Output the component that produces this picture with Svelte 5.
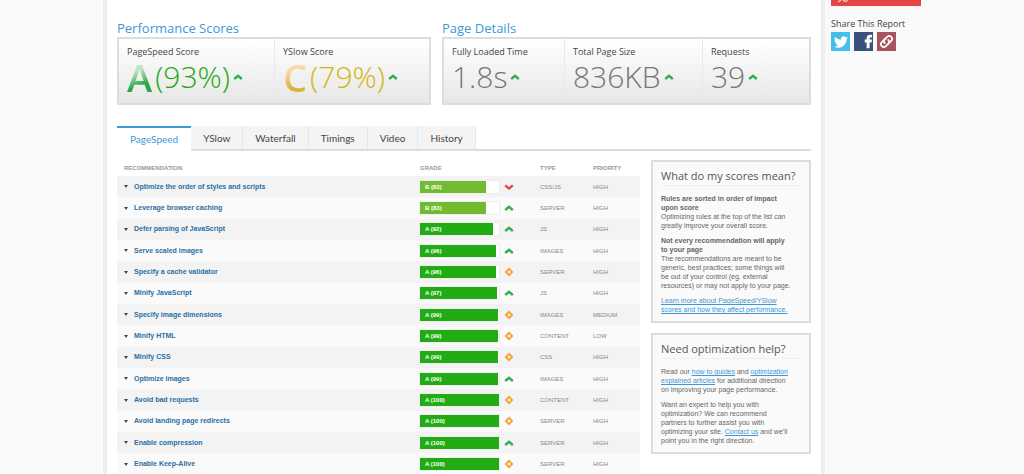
<script>
  const scores = [
    { label: 'PageSpeed Score', grade: 'A', value: '(93%)', tone: 'green' },
    { label: 'YSlow Score', grade: 'C', value: '(79%)', tone: 'gold' }
  ];
  const details = [
    { label: 'Fully Loaded Time', value: '1.8s' },
    { label: 'Total Page Size', value: '836KB' },
    { label: 'Requests', value: '39' }
  ];
  const tabs = ['PageSpeed', 'YSlow', 'Waterfall', 'Timings', 'Video', 'History'];
  let active = $state('PageSpeed');
  const rows = [
    ['Optimize the order of styles and scripts', 'B', 83, 'down', 'CSS/JS', 'HIGH'],
    ['Leverage browser caching', 'B', 83, 'up', 'SERVER', 'HIGH'],
    ['Defer parsing of JavaScript', 'A', 92, 'up', 'JS', 'HIGH'],
    ['Serve scaled images', 'A', 96, 'up', 'IMAGES', 'HIGH'],
    ['Specify a cache validator', 'A', 96, 'same', 'SERVER', 'HIGH'],
    ['Minify JavaScript', 'A', 97, 'up', 'JS', 'HIGH'],
    ['Specify image dimensions', 'A', 99, 'same', 'IMAGES', 'MEDIUM'],
    ['Minify HTML', 'A', 99, 'same', 'CONTENT', 'LOW'],
    ['Minify CSS', 'A', 99, 'same', 'CSS', 'HIGH'],
    ['Optimize images', 'A', 99, 'up', 'IMAGES', 'HIGH'],
    ['Avoid bad requests', 'A', 100, 'same', 'CONTENT', 'HIGH'],
    ['Avoid landing page redirects', 'A', 100, 'same', 'SERVER', 'HIGH'],
    ['Enable compression', 'A', 100, 'up', 'SERVER', 'HIGH'],
    ['Enable Keep-Alive', 'A', 100, 'same', 'SERVER', 'HIGH']
  ];
</script>

{#snippet trend(kind)}
  <svg class="trend" viewBox="0 0 10 10" aria-hidden="true">
    {#if kind === 'up'}
      <path d="M1.2 7 5 3.8 8.8 7" stroke="#32ac4e" />
    {:else if kind === 'down'}
      <path d="M1.2 3.4 5 6.6 8.8 3.4" stroke="#dc4547" />
    {:else}
      <path d="M5 0.600 9.400 5 5 9.400 0.600 5ZM5 3.200 3.200 5 5 6.800 6.800 5Z" fill="#f7a12c" fill-rule="evenodd" />
    {/if}
  </svg>
{/snippet}

<div class="page">
  <main>
    <div class="summary">
      <section class="scores">
        <h2>Performance Scores</h2>
        <div class="box">
          {#each scores as s}
            <div class="cell">
              <h3>{s.label}</h3>
              <div class="figure {s.tone}"><b>{s.grade}</b><span>{s.value}</span>{@render trend('up')}</div>
            </div>
          {/each}
        </div>
      </section>
      <section class="details">
        <h2>Page Details</h2>
        <div class="box">
          {#each details as d}
            <div class="cell">
              <h3>{d.label}</h3>
              <div class="figure"><span>{d.value}</span>{@render trend('up')}</div>
            </div>
          {/each}
        </div>
      </section>
    </div>

    <nav class="tabs">
      {#each tabs as t}
        <button type="button" class:active={active === t} onclick={() => (active = t)}>{t}</button>
      {/each}
    </nav>

    <div class="content">
      <table>
        <colgroup><col /><col class="c-grade" /><col class="c-trend" /><col class="c-type" /><col class="c-priority" /></colgroup>
        <thead>
          <tr><th class="name">Recommendation</th><th colspan="2">Grade</th><th>Type</th><th>Priority</th></tr>
        </thead>
        <tbody>
          {#each rows as [name, grade, score, change, type, priority]}
            <tr>
              <td class="name">
                <a href="#rule"><svg viewBox="0 0 4 3" aria-hidden="true"><path d="M0 0h4L2 3z" fill="#3d4a5e" /></svg>{name}</a>
              </td>
              <td>
                <div class="meter"><div class="fill {grade}" style:width="{score}%">{grade} ({score})</div></div>
              </td>
              <td class="change">{@render trend(change)}</td>
              <td>{type}</td>
              <td>{priority}</td>
            </tr>
          {/each}
        </tbody>
      </table>

      <div class="help">
        <section class="panel">
          <h2>What do my scores mean?</h2>
          <p><strong>Rules are sorted in order of impact upon score</strong><br />Optimizing rules at the top of the list can greatly improve your overall score.</p>
          <p><strong>Not every recommendation will apply to your page</strong><br />The recommendations are meant to be generic, best practices; some things will be out of your control (eg. external resources) or may not apply to your page.</p>
          <p><a href="#scores">Learn more about PageSpeed/YSlow scores and how they affect performance.</a></p>
        </section>
        <section class="panel">
          <h2>Need optimization help?</h2>
          <p>Read our <a href="#guides">how to guides</a> and <a href="#articles">optimization explained articles</a> for additional direction on improving your page performance.</p>
          <p>Want an expert to help you with optimization? We can recommend partners to further assist you with optimizing your site. <a href="#contact">Contact us</a> and we'll point you in the right direction.</p>
        </section>
      </div>
    </div>
  </main>

  <aside>
    <button type="button" class="download" aria-label="Download PDF">
      <svg viewBox="0 0 12 3" aria-hidden="true"><path d="M1 1.600C2.500 1.400 3.300 1 4 0M6 0C7.500 1.600 9.500 2.200 10.500 0" fill="none" stroke="#fff" stroke-opacity=".75" stroke-width="1.300" /></svg>
    </button>
    <h3>Share This Report</h3>
    <div class="share">
      <a href="#twitter" class="twitter" aria-label="Twitter">
        <svg viewBox="0 0 24 24"><path fill="#fff" d="M23.950 4.570a10 10 0 0 1-2.820.770 4.960 4.960 0 0 0 2.160-2.720c-.950.550-2 .960-3.130 1.180a4.920 4.920 0 0 0-8.380 4.480C7.690 8.090 4.070 6.130 1.640 3.160a4.820 4.820 0 0 0-.670 2.480c0 1.710.870 3.210 2.190 4.100a4.900 4.900 0 0 1-2.230-.620v.060a4.920 4.920 0 0 0 3.950 4.830 5 5 0 0 1-2.210.080 4.940 4.940 0 0 0 4.600 3.420A9.870 9.870 0 0 1 0 19.540a14 14 0 0 0 7.550 2.210c9.050 0 14-7.500 14-13.980l-.020-.640a9.930 9.930 0 0 0 2.420-2.560z" /></svg>
      </a>
      <a href="#facebook" class="facebook" aria-label="Facebook">
        <svg viewBox="0 0 20 20"><path fill="#fff" d="M13.300 17v-6H11.300V8h2V6.500C13.300 4.200 14.700 3 17 3H19v2.900h-1.300c-1 0-1.300.500-1.300 1.300V8H19l-.400 3h-2.200v6z" /></svg>
      </a>
      <a href="#link" class="link" aria-label="Copy link">
        <svg viewBox="0 0 20 20"><g transform="rotate(-45 10 10)" fill="none" stroke="#fff" stroke-width="1.800" stroke-linecap="round"><path d="M10.500 7H6a3 3 0 0 0 0 6h3.500a3 3 0 0 0 3-3" /><path d="M9.500 13H14a3 3 0 0 0 0-6h-3.500a3 3 0 0 0-3 3" /></g></svg>
      </a>
    </div>
  </aside>
</div>

<style>
  :global(body) {
    margin: 0;
    background-color: #fbfbfb;
    background-image:
      repeating-linear-gradient(0deg, rgba(0, 0, 0, 0.012) 0 1px, transparent 1px 3px),
      repeating-linear-gradient(90deg, rgba(0, 0, 0, 0.012) 0 1px, transparent 1px 4px);
  }
  .page {
    box-sizing: border-box;
    max-width: 818px;
    min-height: 100vh;
    margin: 0 auto;
    display: flex;
    gap: 6px;
    font: 7px/9px "Liberation Sans", Arial, sans-serif;
    color: #666;
  }
  h2, h3 {
    margin: 0;
    font-family: "Open Sans", sans-serif;
    font-weight: 400;
  }
  main {
    flex: 1;
    min-width: 0;
    padding: 20px 10px 0;
    background: #fff;
    border: solid #eee;
    border-width: 0 4px;
  }
  .summary {
    display: grid;
    grid-template-columns: 314fr 369fr;
    gap: 11px;
  }
  .summary h2 {
    font-size: 13px;
    line-height: 17px;
    color: #3d98d8;
  }
  .box {
    display: grid;
    height: 64px;
    border: 2px solid #ddd;
    background: linear-gradient(#fff, #e7e7e7);
  }
  .scores .box { grid-template-columns: 1fr 1fr; }
  .details .box { grid-template-columns: 120fr 138fr 107fr; }
  .cell {
    padding: 7px 8px;
    border-left: 1px solid #e9e9e9;
  }
  .cell:first-child { border-left: 0; }
  h3 {
    font-size: 9px;
    line-height: 12px;
    color: #444;
    white-space: nowrap;
  }
  .figure {
    display: flex;
    align-items: center;
    gap: 3px;
    font: 300 30px/38px "Open Sans", sans-serif;
    color: #777;
  }
  .figure b {
    font-size: 38px;
    font-weight: 600;
    background: linear-gradient(160deg, #c2e2c0 35%, #28a745 70%);
    background-clip: text;
    color: transparent;
  }
  .gold b {
    background: linear-gradient(160deg, #fbd9a4 35%, #d6b63a 70%);
    background-clip: text;
  }
  .figure.green { color: #22ac14; }
  .figure.gold { color: #ceb810; }
  .trend {
    display: block;
    flex: none;
    width: 10px;
    height: 10px;
    fill: none;
    stroke-width: 2.3;
  }
  .tabs {
    display: flex;
    margin-top: 21px;
    background: linear-gradient(#ddd, #ddd) bottom / 100% 2px no-repeat;
  }
  .tabs button {
    margin: 0 0 2px;
    padding: 0 12px;
    height: 23px;
    border: 0;
    border-right: 1px solid #e8e8e8;
    background: #f4f4f4;
    color: #444;
    font: 10px/20px Lato, sans-serif;
  }
  .tabs button.active {
    height: 25px;
    margin: 0;
    padding: 0 13px 2px;
    border-top: 2px solid #3d98d8;
    border-right: 0;
    background: #fff;
    color: #3d98d8;
  }
  .content {
    display: flex;
    align-items: flex-start;
    gap: 11px;
    padding-top: 9px;
  }
  table {
    flex: 1;
    min-width: 0;
    height: 315px;
    table-layout: fixed;
    border-collapse: collapse;
    color: #888;
    font-size: 6px;
    line-height: 8px;
  }
  .c-grade { width: 79px; }
  .c-trend { width: 41px; }
  .c-type { width: 53px; }
  .c-priority { width: 47px; }
  th, td {
    padding: 0;
    text-align: left;
    vertical-align: middle;
  }
  th {
    height: 16px;
    color: #999;
    text-transform: uppercase;
  }
  .name { padding-left: 7px; }
  tbody tr:nth-child(odd) { background: #f3f3f3; }
  tbody tr:nth-child(even) { background: #fafafa; }
  td a {
    display: flex;
    align-items: center;
    gap: 6px;
    color: #2a6fa3;
    font-size: 7px;
    font-weight: 700;
    text-decoration: none;
  }
  td a svg {
    width: 4px;
    height: 3px;
  }
  .meter {
    background: #fff;
    box-shadow: 0 0 0 1px #eee;
  }
  .fill {
    box-sizing: border-box;
    height: 12px;
    padding-left: 5px;
    color: #fff;
    font-weight: 700;
    line-height: 12px;
  }
  .A { background: #22ac14; }
  .B { background: #72bb30; }
  .change { padding-left: 5px; }
  .help {
    flex: none;
    width: 160px;
    display: grid;
    gap: 10px;
  }
  .panel {
    box-sizing: border-box;
    min-width: 0;
    padding: 6px 8px 7px;
    border: 2px solid #ddd;
    background: #fafafa;
  }
  .panel h2 {
    padding-bottom: 1px;
    border-bottom: 1px solid #eee;
    color: #555;
    font-size: 11px;
    line-height: 16px;
    white-space: nowrap;
  }
  p {
    margin: 8px 0 0;
    padding-right: 9px;
  }
  p + p { margin-top: 6px; }
  p a { color: #3d98d8; }
  aside {
    flex: none;
    width: 90px;
  }
  .download {
    display: flex;
    align-items: flex-start;
    width: 100%;
    height: 6px;
    margin-bottom: 12px;
    padding: 0 6px;
    border: 0;
    background: #e64545;
  }
  .download svg {
    width: 12px;
    height: 3px;
  }
  .share {
    display: flex;
    gap: 4px;
    margin-top: 2px;
  }
  .share a {
    display: flex;
    width: 19px;
    height: 19px;
    align-items: center;
    justify-content: center;
  }
  .share svg {
    width: 19px;
    height: 19px;
  }
  .share .twitter svg {
    width: 14px;
    height: 14px;
  }
  .twitter { background: #44bfea; }
  .facebook { background: #39517c; }
  .link { background: #a65560; }
</style>
